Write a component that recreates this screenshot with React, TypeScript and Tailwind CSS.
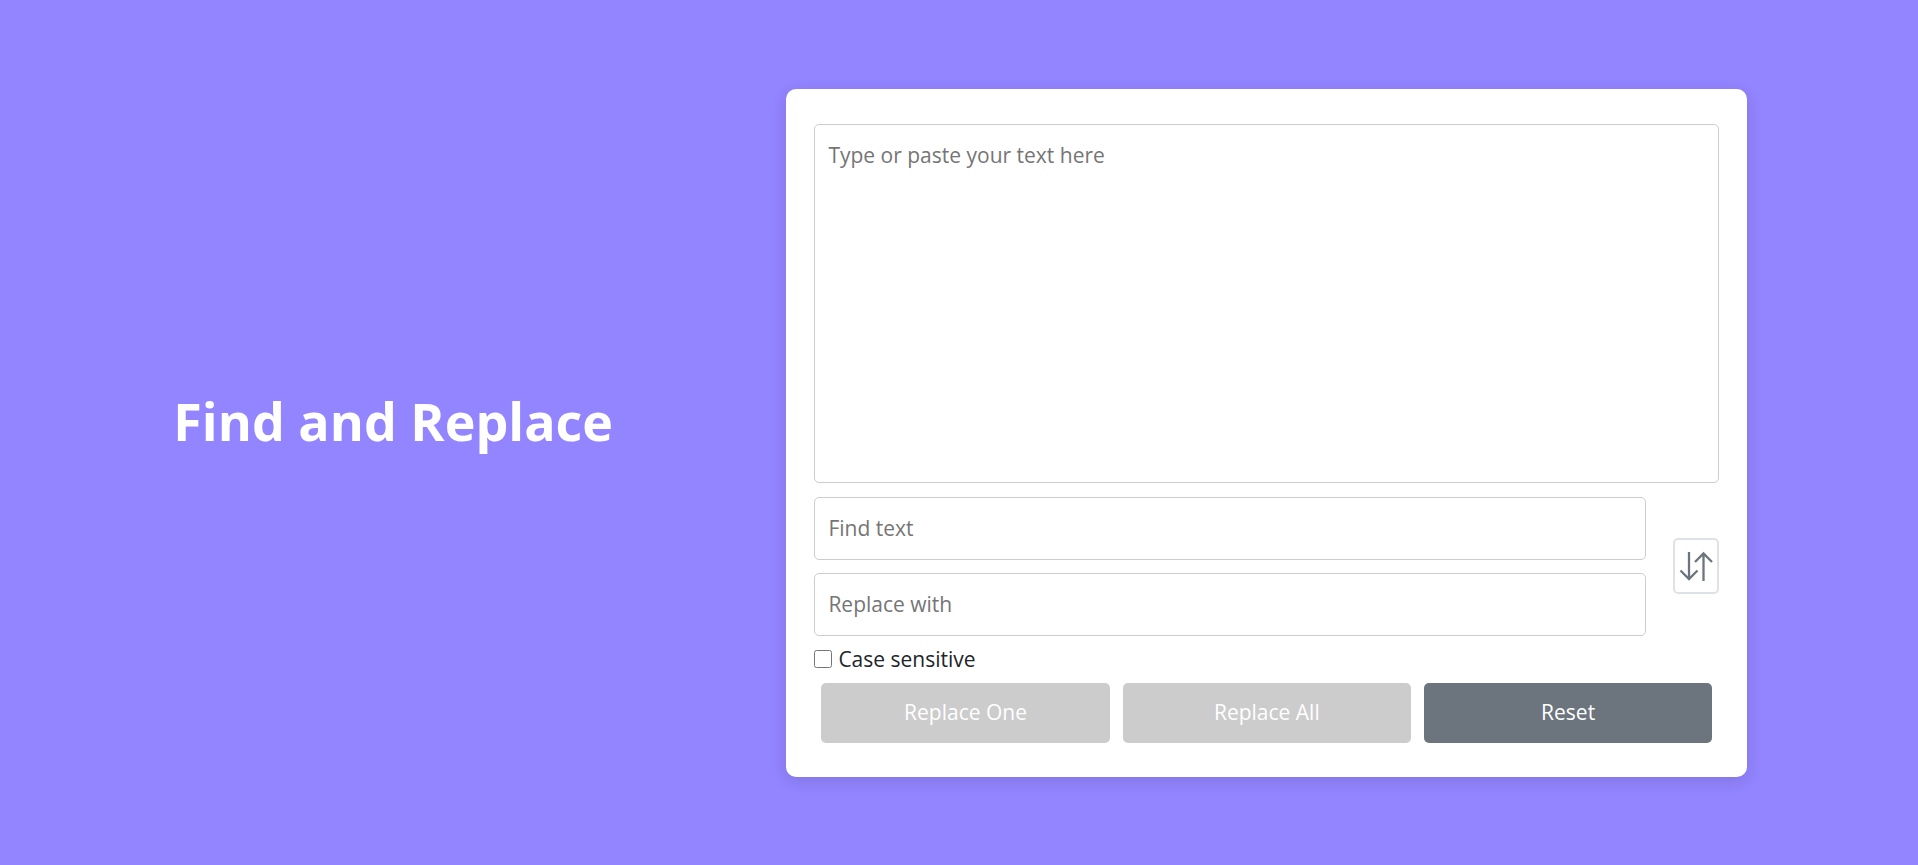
import { useState } from "react";

const fieldClass =
  "block w-full rounded-[5px] border border-[#ccc] bg-white px-[13px] py-4 text-[21px] leading-[29px] text-[#212529] placeholder:text-[#757575] placeholder:opacity-100";

const buttonClass =
  "h-[60px] flex-1 rounded-[5px] text-[21px] leading-[29px] text-white bg-[#6c757d] disabled:bg-[#ccc]";

function SwapIcon() {
  return (
    <svg
      width="34"
      height="32"
      viewBox="0 0 34 32"
      fill="none"
      stroke="#6c757d"
      strokeWidth="2.3"
      aria-hidden="true"
    >
      <path d="M10 2v27M1.500 20.500l8.500 8.500 8.500-8.500" />
      <path d="M24.500 31V3.500M16 12l8.500-8.500L33 12" />
    </svg>
  );
}

function escapePattern(value: string) {
  return value.replace(/[.*+?^${}()|[\]\\]/g, "\\$&");
}

export default function App() {
  const [text, setText] = useState("");
  const [find, setFind] = useState("");
  const [replacement, setReplacement] = useState("");
  const [caseSensitive, setCaseSensitive] = useState(false);

  const disabled = !text || !find;

  const replace = (all: boolean) => {
    const flags = (all ? "g" : "") + (caseSensitive ? "" : "i");
    setText(text.replace(new RegExp(escapePattern(find), flags), () => replacement));
  };

  const swap = () => {
    setFind(replacement);
    setReplacement(find);
  };

  const reset = () => {
    setText("");
    setFind("");
    setReplacement("");
    setCaseSensitive(false);
  };

  return (
    <div className="flex min-h-screen items-center bg-[#9384ff] font-['Segoe_UI','Open_Sans',sans-serif] text-[#212529]">
      <header className="w-[41%] pb-6 text-center">
        <h1 className="text-[52px] leading-[68px] font-bold text-white">Find and Replace</h1>
      </header>
      <main className="w-[50.1%] rounded-[10px] bg-white px-7 pt-[35px] pb-[34px] shadow-[0_4px_16px_rgba(0,0,0,0.12)]">
        <textarea
          aria-label="Text"
          placeholder="Type or paste your text here"
          className={`${fieldClass} h-[359px] resize-none`}
          value={text}
          onChange={(e) => setText(e.target.value)}
        />
        <div className="mt-3.5 flex items-center gap-[27px]">
          <div className="flex flex-1 flex-col gap-[13px]">
            <input
              type="text"
              aria-label="Find text"
              placeholder="Find text"
              className={fieldClass}
              value={find}
              onChange={(e) => setFind(e.target.value)}
            />
            <input
              type="text"
              aria-label="Replace with"
              placeholder="Replace with"
              className={fieldClass}
              value={replacement}
              onChange={(e) => setReplacement(e.target.value)}
            />
          </div>
          <button
            type="button"
            aria-label="Swap find and replace"
            onClick={swap}
            className="flex h-14 w-[46px] items-center justify-center rounded-[5px] border-2 border-[#dee2e6] bg-white"
          >
            <SwapIcon />
          </button>
        </div>
        <div className="my-2 flex items-center gap-1.5">
          <input
            id="case-sensitive"
            type="checkbox"
            className="size-[18px]"
            checked={caseSensitive}
            onChange={(e) => setCaseSensitive(e.target.checked)}
          />
          <label htmlFor="case-sensitive" className="text-[21px] leading-[31px]">
            Case sensitive
          </label>
        </div>
        <div className="flex gap-[13px] px-[7px]">
          <button type="button" className={buttonClass} disabled={disabled} onClick={() => replace(false)}>
            Replace One
          </button>
          <button type="button" className={buttonClass} disabled={disabled} onClick={() => replace(true)}>
            Replace All
          </button>
          <button type="button" className={buttonClass} onClick={reset}>
            Reset
          </button>
        </div>
      </main>
    </div>
  );
}
